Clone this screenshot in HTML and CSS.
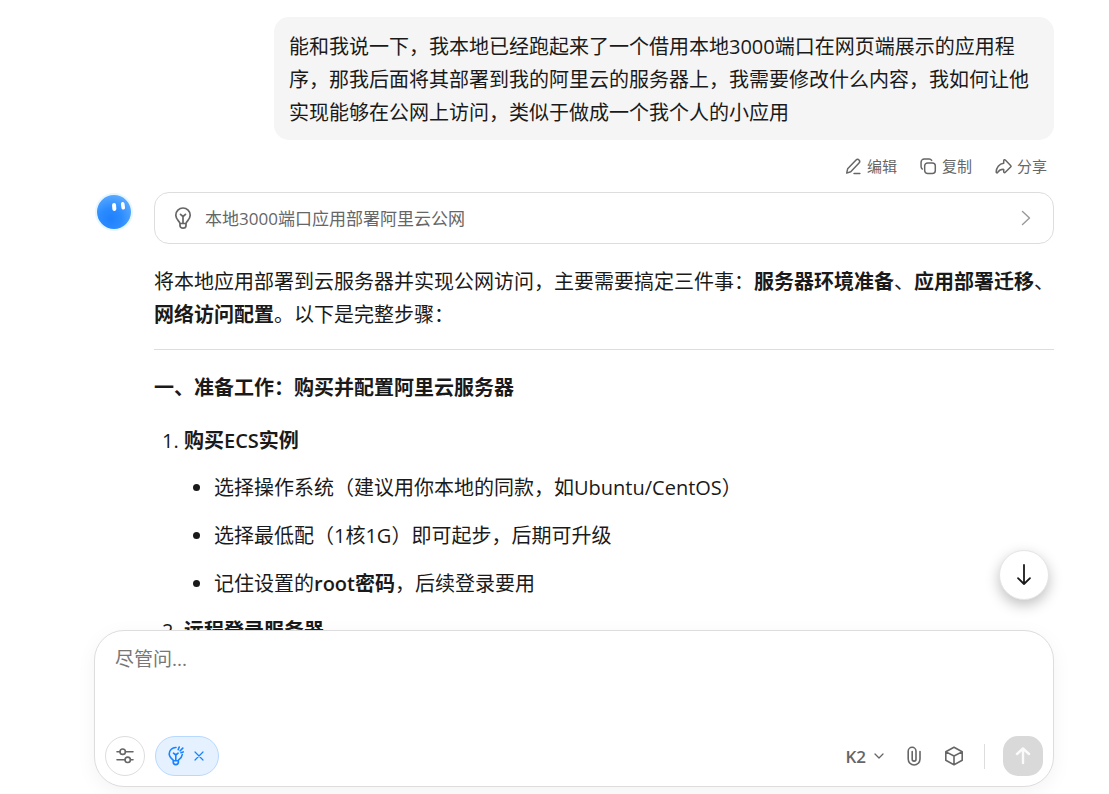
FILE: index.html
```html
<!DOCTYPE html>
<html lang="zh-CN">
<head>
<meta charset="utf-8">
<meta name="viewport" content="width=device-width, initial-scale=1">
<title>本地3000端口应用部署阿里云公网</title>
<link rel="stylesheet" href="styles.css">
</head>
<body>
<div class="chat">
  <main class="thread">
    <section class="user-turn">
      <p class="bubble">能和我说一下，我本地已经跑起来了一个借用本地3000端口在网页端展示的应用程序，那我后面将其部署到我的阿里云的服务器上，我需要修改什么内容，我如何让他实现能够在公网上访问，类似于做成一个我个人的小应用</p>
      <div class="actions">
        <button class="action" type="button">
          <svg class="icon-small" viewBox="0 0 16 16"><path d="M1.600 14.200 2.500 10.200 10.400 1.900a1.900 1.900 0 0 1 2.800 0 2 2 0 0 1 0 2.800L5.400 13 1.600 14.200ZM8.500 14.600h5.500"/></svg>
          编辑
        </button>
        <button class="action" type="button">
          <svg class="icon-small" viewBox="0 0 16 16"><rect x="4.400" y="4.600" width="10" height="10" rx="2.800"/><path d="M2.200 10.400C1.400 9.800 1 9 1 8V4a3 3 0 0 1 3-3h4.600c1 0 1.900.5 2.400 1.300"/></svg>
          复制
        </button>
        <button class="action" type="button">
          <svg class="icon-small" viewBox="0 0 16 16"><path d="M8.200 5V2.600c0-.9.900-1.300 1.500-.7l5 5.100c.5.500.5 1 0 1.500l-5 5c-.6.600-1.500.2-1.500-.6v-2.200c-2.600-.1-4.300.7-5.700 2.900-.5.700-1.400.4-1.400-.4C1.200 9 3.900 5.400 8.200 5Z"/></svg>
          分享
        </button>
      </div>
    </section>

    <section class="reply">
      <svg class="avatar" viewBox="0 0 38 38" role="img" aria-label="助手">
        <defs><radialGradient id="face" cx="40%" cy="70%" r="70%"><stop offset="0" stop-color="#1f80fc"/><stop offset="0.45" stop-color="#2b8bff"/><stop offset="1" stop-color="#58a9ff"/></radialGradient></defs>
        <circle cx="19" cy="19" r="19" fill="#e6f6ff"/>
        <circle cx="19" cy="19" r="17" fill="url(#face)"/>
        <rect x="17.200" y="10" width="4" height="8" rx="2" fill="#fff" transform="rotate(-5 19 14)"/>
        <rect x="26.200" y="9" width="3.600" height="7.500" rx="1.800" fill="#fff" transform="rotate(-8 28 13)"/>
      </svg>
      <div class="reply-body">
        <button class="thinking" type="button">
          <svg class="icon-bulb" viewBox="0 0 20 24"><path d="M7 17.500C6.600 15.300 2.800 13.400 2.800 9.200a7.200 7.200 0 0 1 14.400 0c0 4.200-3.800 6.100-4.200 8.300M7 17.500h6v2c0 1.500-1.200 2.700-3 2.700s-3-1.200-3-2.700ZM10 17V10.500M7.500 8.300 10 10.500 12.500 8.300"/></svg>
          <span class="thinking-title">本地3000端口应用部署阿里云公网</span>
          <svg class="icon-next" viewBox="0 0 10 16"><path d="m1.500 1.500 7 6.500-7 6.500"/></svg>
        </button>
        <p class="lead">将本地应用部署到云服务器并实现公网访问，主要需要搞定三件事：<strong>服务器环境准备</strong>、<strong>应用部署迁移</strong>、<strong>网络访问配置</strong>。以下是完整步骤：</p>
        <hr class="rule">
        <h3 class="heading">一、准备工作：购买并配置阿里云服务器</h3>
        <ol class="steps">
          <li><strong>购买<span class="latin">ECS</span>实例</strong>
            <ul class="points">
              <li>选择操作系统（建议用你本地的同款，如Ubuntu/CentOS）</li>
              <li>选择最低配（1核1G）即可起步，后期可升级</li>
              <li>记住设置的<strong><span class="latin">root</span>密码</strong>，后续登录要用</li>
            </ul>
          </li>
          <li><strong>远程登录服务器</strong></li>
        </ol>
      </div>
    </section>
  </main>

  <button class="to-bottom" type="button" aria-label="滚动到底部">
    <svg class="icon-down" viewBox="0 0 20 24"><path d="M10 2v19M4 15.200l6 5.800 6-5.800"/></svg>
  </button>

  <form class="composer">
    <textarea class="prompt" rows="2" aria-label="消息" placeholder="尽管问..."></textarea>
    <div class="toolbar">
      <div class="tools">
        <button class="round" type="button" aria-label="设置">
          <svg class="icon-tool" viewBox="0 0 20 20"><path d="M2 5.700h3M10.500 5.700H18M2 13.800h8M15.500 13.800H18"/><circle cx="7.700" cy="5.700" r="2.700"/><circle cx="12.700" cy="13.800" r="2.700"/></svg>
        </button>
        <button class="pill" type="button" aria-label="关闭思考">
          <svg class="icon-tool" viewBox="0 0 20 20"><path d="M10 1.500A6.500 6.500 0 0 0 3.200 7.900c0 2.500 1.700 4.200 4 6.300V16a2.600 2.600 0 0 0 5.200 0v-1.800c2-1.600 3.700-3.400 3.900-5.700M7.200 14.700h5.200M9.800 14.500V8.500M7.500 7.200 9.800 9 12.100 7.200M12.200 3.600l1-2.600M14.200 4.800l2.600-2.700M15 6.700l2.200-.8"/></svg>
          <svg class="icon-close" viewBox="0 0 10 10"><path d="m1 1 8 8M9 1 1 9"/></svg>
        </button>
      </div>
      <div class="tools tools-end">
        <button class="model" type="button">K2
          <svg class="icon-chevron" viewBox="0 0 10 8"><path d="m1 2 4 4 4-4"/></svg>
        </button>
        <button class="plain" type="button" aria-label="附件">
          <svg class="icon-tool" viewBox="0 0 20 20"><path d="M16 5.500v7.600a5.900 5.900 0 0 1-11.800 0V5.200a3.900 3.900 0 0 1 7.800 0v8a1.900 1.900 0 0 1-3.800 0V5.500"/></svg>
        </button>
        <button class="plain" type="button" aria-label="工具">
          <svg class="icon-tool" viewBox="0 0 20 20"><path d="M10 1.200 18.200 5.700v8.600L10 18.800l-8.200-4.500V5.700ZM2 5.900 10 10l8-4.100M10 10v8.600"/></svg>
        </button>
        <span class="divider"></span>
        <button class="send" type="submit" aria-label="发送">
          <svg class="icon-send" viewBox="0 0 20 20"><path d="M10 17V2.500M4 8l6-5.500L16 8"/></svg>
        </button>
      </div>
    </div>
  </form>
</div>
</body>
</html>
```
FILE: styles.css
```css
* {
  box-sizing: border-box;
}

body {
  margin: 0;
  background: #fff;
  color: #1a1a1a;
  font: 20px/33px "Open Sans", "Noto Sans CJK SC", sans-serif;
}

button,
textarea {
  font: inherit;
  color: inherit;
}

button {
  padding: 0;
  border: 0;
  background: none;
  cursor: pointer;
}

svg {
  display: block;
  flex: none;
  fill: none;
  stroke: currentColor;
  stroke-linecap: round;
  stroke-linejoin: round;
}

.avatar {
  stroke: none;
}

.chat {
  position: relative;
  display: flex;
  flex-direction: column;
  height: 100vh;
  padding: 0 55px 7px 94px;
}

.thread {
  flex: 1;
  min-height: 0;
  overflow: hidden;
  padding-top: 17px;
}

.user-turn {
  display: flex;
  flex-direction: column;
  align-items: flex-end;
  padding-left: 180px;
}

.bubble {
  margin: 0;
  padding: 13px 15px 11px;
  border-radius: 15px;
  background: #f5f5f5;
}

.actions {
  display: flex;
  gap: 23px;
  padding: 16px 7px 15px;
}

.action {
  display: flex;
  align-items: center;
  gap: 5px;
  color: #666;
  font-size: 15px;
  line-height: 21px;
}

.icon-small {
  width: 17px;
  height: 17px;
  stroke-width: 1.4;
}

.reply {
  display: flex;
  align-items: flex-start;
  gap: 21px;
  padding-left: 1px;
}

.avatar {
  width: 38px;
  height: 38px;
  margin-top: 1px;
}

.reply-body {
  flex: 1;
  min-width: 0;
}

.thinking {
  display: flex;
  align-items: center;
  gap: 12px;
  width: 100%;
  height: 52px;
  padding: 0 22px 0 18px;
  border: 1px solid #ddd;
  border-radius: 15px;
  color: #666;
  font-size: 17px;
  text-align: left;
}

.thinking-title {
  flex: 1;
}

.icon-bulb {
  width: 20px;
  height: 24px;
  stroke-width: 1.7;
}

.icon-next {
  width: 10px;
  height: 16px;
  stroke: #999;
  stroke-width: 1.4;
}

.lead {
  margin: 21px 0 0;
}

.rule {
  height: 1px;
  margin: 18px 0 21px;
  border: 0;
  background: #ddd;
}

.heading {
  margin: 0 0 20px;
  font-size: 20px;
}

.steps {
  margin: 0;
  padding-left: 30px;
}

.points {
  margin: 14px 0;
  padding-left: 30px;
  list-style: disc;
}

.points li + li {
  margin-top: 15px;
}

.latin {
  font-weight: 600;
}

.to-bottom {
  position: absolute;
  right: 60px;
  bottom: 194px;
  display: grid;
  place-items: center;
  width: 50px;
  height: 50px;
  border: 1px solid #e5e5e5;
  border-radius: 50%;
  background: #fff;
  box-shadow: 0 5px 14px #00000040;
}

.icon-down {
  width: 20px;
  height: 24px;
  stroke-width: 1.8;
}

.composer {
  position: relative;
  display: flex;
  flex-direction: column;
  gap: 24px;
  padding: 12px 10px 10px;
  border: 1px solid #ddd;
  border-radius: 30px;
  background: #fff;
  box-shadow: 0 5px 20px #0000000d;
}

.prompt {
  display: block;
  width: 100%;
  height: 69px;
  padding: 0 10px;
  border: 0;
  outline: 0;
  background: none;
  font-size: 19px;
  resize: none;
}

.prompt::placeholder {
  color: #777;
}

.toolbar,
.tools {
  display: flex;
  align-items: center;
}

.toolbar {
  justify-content: space-between;
  color: #666;
}

.tools {
  gap: 10px;
}

.round,
.pill {
  display: flex;
  align-items: center;
  height: 40px;
  border: 1px solid #ddd;
  border-radius: 20px;
}

.round {
  justify-content: center;
  width: 40px;
}

.pill {
  gap: 8px;
  padding: 0 14px 0 10px;
  border-color: #b8d9ff;
  background: #e5f1ff;
  color: #1783ff;
}

.icon-tool {
  width: 20px;
  height: 20px;
  stroke-width: 1.6;
}

.icon-close {
  width: 10px;
  height: 10px;
  stroke-width: 1.2;
}

.tools-end {
  gap: 20px;
}

.model {
  display: flex;
  align-items: center;
  gap: 8px;
  font-size: 17px;
  font-weight: 600;
}

.icon-chevron {
  width: 10px;
  height: 8px;
  stroke-width: 1.3;
}

.divider {
  width: 1px;
  height: 25px;
  margin-right: -2px;
  background: #ddd;
}

.send {
  display: grid;
  place-items: center;
  width: 40px;
  height: 40px;
  border-radius: 15px;
  background: #d9d9d9;
  color: #fafafa;
}

.icon-send {
  width: 20px;
  height: 20px;
  stroke-width: 2.4;
}
```
